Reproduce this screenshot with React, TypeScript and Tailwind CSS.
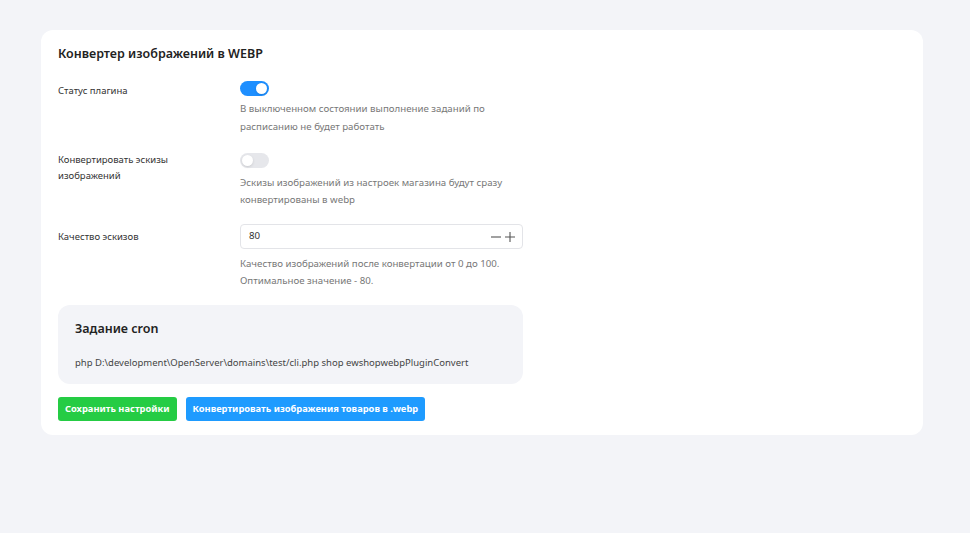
import { useState } from 'react'

const Toggle = ({ on, onChange }: { on: boolean; onChange: () => void }) => (
  <button
    type="button"
    onClick={onChange}
    className={`relative block h-[15px] w-[29px] rounded-full ${on ? 'bg-[#1e8fff]' : 'bg-[#e6e7eb]'}`}
  >
    <span
      className={`absolute top-[2px] h-[11px] w-[11px] rounded-full bg-white shadow-sm ${on ? 'left-[16px]' : 'left-[2px]'}`}
    />
  </button>
)

export default function App() {
  const [enabled, setEnabled] = useState(true)
  const [thumbs, setThumbs] = useState(false)
  const [quality, setQuality] = useState(80)

  return (
    <div
      className="min-h-[533px] bg-[#f3f4f8] px-[41px] pt-[30px] text-[#333]"
      style={{ fontFamily: '"Noto Sans", "Open Sans", sans-serif' }}
    >
      <div className="w-[882px] rounded-[12px] bg-white px-[17px] pb-[14px] pt-[14px]">
        <h1 className="text-[12.5px] font-semibold leading-[20px] text-[#222]">Конвертер изображений в WEBP</h1>

        {/* Status */}
        <div className="mt-[17px] flex">
          <div className="w-[182px] pt-[2px] text-[9.5px] leading-[16px] text-[#333]">Статус плагина</div>
          <div>
            <Toggle on={enabled} onChange={() => setEnabled(!enabled)} />
            <p className="mt-[4px] w-[283px] text-[9.7px] leading-[18px] text-[#777]">
              В выключенном состоянии выполнение заданий по расписанию не будет работать
            </p>
          </div>
        </div>

        {/* Thumbnails */}
        <div className="mt-[16px] flex">
          <div className="w-[182px] text-[9.5px] leading-[16px] text-[#333]">
            Конвертировать эскизы
            <br />
            изображений
          </div>
          <div className="pt-[1px]">
            <Toggle on={thumbs} onChange={() => setThumbs(!thumbs)} />
            <p className="mt-[6px] w-[283px] text-[9.7px] leading-[17px] text-[#777]">
              Эскизы изображений из настроек магазина будут сразу конвертированы в webp
            </p>
          </div>
        </div>

        {/* Quality */}
        <div className="mt-[16px] flex">
          <div className="flex h-[25px] w-[182px] items-center text-[9.5px] leading-[16px] text-[#333]">
            Качество эскизов
          </div>
          <div>
            <div className="flex h-[25px] w-[283px] items-center rounded-[4px] border border-[#e3e4e8] pl-[8px] pr-[7px]">
              <span className="flex-1 text-[9.7px] text-[#333]">{quality}</span>
              <button type="button" onClick={() => setQuality(Math.max(0, quality - 1))} className="flex">
                <svg width="10" height="10" viewBox="0 0 10 10" stroke="#555" strokeWidth="1.1">
                  <path d="M0 5h10" />
                </svg>
              </button>
              <button
                type="button"
                onClick={() => setQuality(Math.min(100, quality + 1))}
                className="ml-[4px] flex"
              >
                <svg width="10" height="10" viewBox="0 0 10 10" stroke="#555" strokeWidth="1.1">
                  <path d="M0 5h10M5 0v10" />
                </svg>
              </button>
            </div>
            <p className="mt-[6px] text-[9.7px] leading-[17px] text-[#777]">
              Качество изображений после конвертации от 0 до 100.
              <br />
              Оптимальное значение - 80.
            </p>
          </div>
        </div>

        {/* Cron */}
        <div className="mt-[16px] w-[465px] rounded-[12px] bg-[#f3f4f8] px-[17px] pb-[14px] pt-[15px]">
          <h2 className="text-[12.5px] font-semibold leading-[18px] text-[#222]">Задание cron</h2>
          <p className="mt-[18px] text-[9.5px] leading-[14px] text-[#444]">
            php D:\development\OpenServer\domains\test/cli.php shop ewshopwebpPluginConvert
          </p>
        </div>

        {/* Actions */}
        <div className="mt-[13px] flex gap-[9px]">
          <button
            type="button"
            className="h-[24px] rounded-[3px] bg-[#25cc44] px-[7px] text-[9.3px] font-bold text-white"
          >
            Сохранить настройки
          </button>
          <button
            type="button"
            className="h-[24px] rounded-[3px] bg-[#1e9bff] px-[7px] text-[9.3px] font-bold text-white"
          >
            Конвертировать изображения товаров в .webp
          </button>
        </div>
      </div>
    </div>
  )
}
